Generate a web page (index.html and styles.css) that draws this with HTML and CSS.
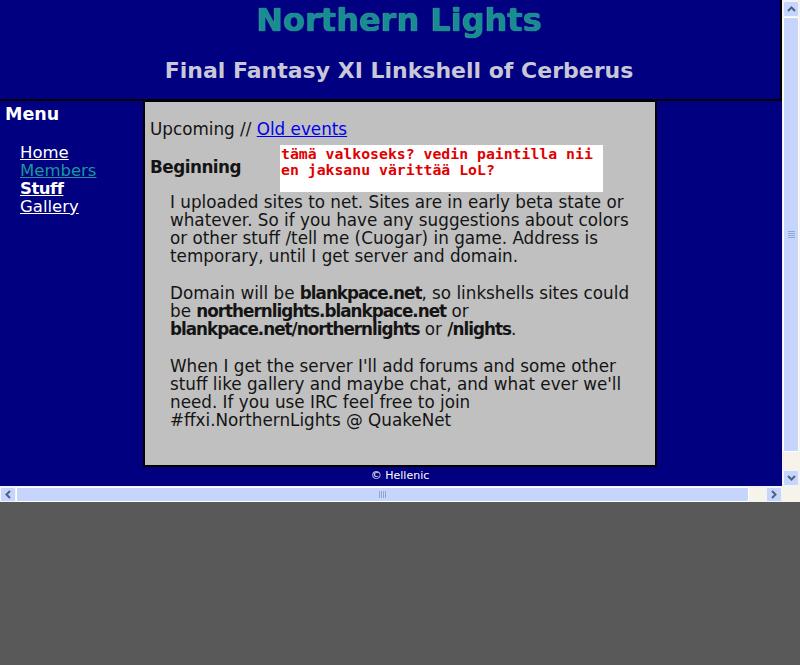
FILE: index.html
```html
<!DOCTYPE html>
<html>
<head>
<meta charset="utf-8">
<link rel="stylesheet" href="styles.css">
</head>
<body>
<div class="window">
  <div class="page">
    <div class="header">
      <h1 class="title">Northern Lights</h1>
      <h2 class="subtitle">Final Fantasy XI Linkshell of Cerberus</h2>
    </div>
    <div class="main">
      <div class="menu">
        <div class="menu-title">Menu</div>
        <ul class="menu-list">
          <li><a class="mlink" href="#">Home</a></li>
          <li><a class="mlink visited" href="#">Members</a></li>
          <li><a class="mlink hover" href="#">Stuff</a></li>
          <li><a class="mlink" href="#">Gallery</a></li>
        </ul>
      </div>
      <div class="content">
        <div class="nav">Upcoming // <a class="link" href="#">Old events</a></div>
        <div class="row">
          <div class="heading">Beginning</div>
          <div class="note">tämä valkoseks? vedin paintilla nii<br>en jaksanu värittää LoL?</div>
        </div>
        <div class="text">
          <p>I uploaded sites to net. Sites are in early beta state or whatever. So if you have any suggestions about colors or other stuff /tell me (Cuogar) in game. Address is temporary, until I get server and domain.</p>
          <p>Domain will be <b class="strong">blankpace.net</b>, so linkshells sites could be <b class="strong">northernlights.blankpace.net</b> or <b class="strong">blankpace.net/northernlights</b> or <b class="strong">/nlights</b>.</p>
          <p>When I get the server I'll add forums and some other stuff like gallery and maybe chat, and what ever we'll need. If you use IRC feel free to join #ffxi.NorthernLights @ QuakeNet</p>
        </div>
      </div>
    </div>
    <div class="footer">© Hellenic</div>
  </div>
  <div class="vscroll">
    <div class="btn up"><svg width="9" height="6" viewBox="0 0 9 6"><path d="M1 5 L4.5 1.5 L8 5" fill="none" stroke="#4d6185" stroke-width="2"/></svg></div>
    <div class="vthumb"><div class="vgrip"></div></div>
    <div class="vtrack"></div>
    <div class="btn down"><svg width="9" height="6" viewBox="0 0 9 6"><path d="M1 1 L4.5 4.5 L8 1" fill="none" stroke="#4d6185" stroke-width="2"/></svg></div>
  </div>
  <div class="hscroll">
    <div class="btn left"><svg width="6" height="9" viewBox="0 0 6 9"><path d="M5 1 L1.5 4.5 L5 8" fill="none" stroke="#4d6185" stroke-width="2"/></svg></div>
    <div class="hthumb"><div class="hgrip"></div></div>
    <div class="htrack"></div>
    <div class="btn right"><svg width="6" height="9" viewBox="0 0 6 9"><path d="M1 1 L4.5 4.5 L1 8" fill="none" stroke="#4d6185" stroke-width="2"/></svg></div>
  </div>
  <div class="corner"></div>
</div>
</body>
</html>
```
FILE: styles.css
```css
html, body {
  margin: 0;
  padding: 0;
  background: #595959;
}
.window {
  display: grid;
  grid-template-columns: 782px 18px;
  grid-template-rows: 486px 16px;
  width: 800px;
  height: 502px;
}
.page {
  background: #000080;
  overflow: hidden;
  font-family: "DejaVu Sans", Verdana, sans-serif;
  display: flex;
  flex-direction: column;
}
.header {
  height: 99px;
  border-bottom: 2px solid #000;
  border-right: 2px solid #000;
  text-align: center;
  padding-left: 18px;
  box-sizing: content-box;
}
.title {
  margin: 0;
  padding-top: 2px;
  font-size: 32px;
  line-height: 36px;
  font-weight: bold;
  color: #168e90;
  text-shadow: 0 0 1px #7cc0c0;
}
.subtitle {
  margin: 20px 0 0;
  font-size: 22px;
  line-height: 26px;
  font-weight: bold;
  color: #c8c8d8;
}
.main {
  display: flex;
  height: 366px;
}
.menu {
  width: 143px;
  flex: none;
}
.menu-title {
  color: #fff;
  font-weight: bold;
  font-size: 17.5px;
  line-height: 22px;
  padding: 2px 0 0 5px;
}
.menu-list {
  list-style: none;
  margin: 19px 0 0;
  padding: 0 0 0 20px;
}
.menu-list li {
  font-size: 16.5px;
  line-height: 18px;
}
.mlink {
  color: #fff;
}
.mlink.visited {
  color: #1a9898;
}
.mlink.hover {
  font-weight: bold;
  letter-spacing: -0.5px;
}
.content {
  flex: none;
  width: 514px;
  background: #c0c0c0;
  border: 2px solid #000;
  border-top-width: 1px;
  color: #141414;
  font-size: 16.8px;
  line-height: 18px;
  padding: 18px 0 0 5px;
  box-sizing: border-box;
}
.nav {
  height: 18px;
}
.link {
  color: #0000ee;
}
.row {
  display: flex;
  align-items: center;
  margin-top: 7px;
}
.heading {
  width: 130px;
  font-weight: bold;
  letter-spacing: -0.5px;
  padding-bottom: 4px;
}
.note {
  width: 323px;
  height: 47px;
  background: #fff;
  color: #e00000;
  font-family: "DejaVu Sans Mono", monospace;
  font-weight: bold;
  font-size: 14.8px;
  line-height: 16px;
  padding: 1px 0 0 1px;
  box-sizing: border-box;
}
.text {
  padding-left: 20px;
  width: 470px;
  margin-top: 1px;
}
.text p {
  margin: 0 0 19px;
}
.strong {
  letter-spacing: -1px;
}
.footer {
  color: #fff;
  font-size: 11px;
  line-height: 16px;
  text-align: center;
  padding-left: 18px;
  margin-top: 1px;
}
.vscroll {
  background: #f5f3ea;
  display: flex;
  flex-direction: column;
  padding: 1px 1px 0 1px;
  box-sizing: border-box;
}
.btn {
  background: #c5d5fb;
  border: 1px solid #f0f4ff;
  border-radius: 2px;
  box-sizing: border-box;
  display: flex;
  align-items: center;
  justify-content: center;
  flex: none;
}
.vscroll .btn {
  height: 16px;
}
.vthumb {
  height: 435px;
  background: #c6d5fb;
  border: 1px solid #fff;
  border-radius: 2px;
  box-sizing: border-box;
  display: flex;
  align-items: center;
  justify-content: center;
  flex: none;
}
.vgrip {
  width: 7px;
  height: 7px;
  background: repeating-linear-gradient(to bottom, #8fa6d8 0 1px, transparent 1px 2px);
}
.vtrack {
  flex: 1;
}
.hscroll {
  background: #f5f3ea;
  display: flex;
  padding: 1px 0 0 0;
  box-sizing: border-box;
}
.hscroll .btn {
  width: 16px;
  height: 15px;
}
.hthumb {
  width: 733px;
  background: #c6d5fb;
  border: 1px solid #fff;
  border-radius: 2px;
  box-sizing: border-box;
  display: flex;
  align-items: center;
  justify-content: center;
  flex: none;
}
.hgrip {
  width: 7px;
  height: 7px;
  background: repeating-linear-gradient(to right, #8fa6d8 0 1px, transparent 1px 2px);
}
.htrack {
  flex: 1;
}
.corner {
  background: #f5f3ea;
}
```
